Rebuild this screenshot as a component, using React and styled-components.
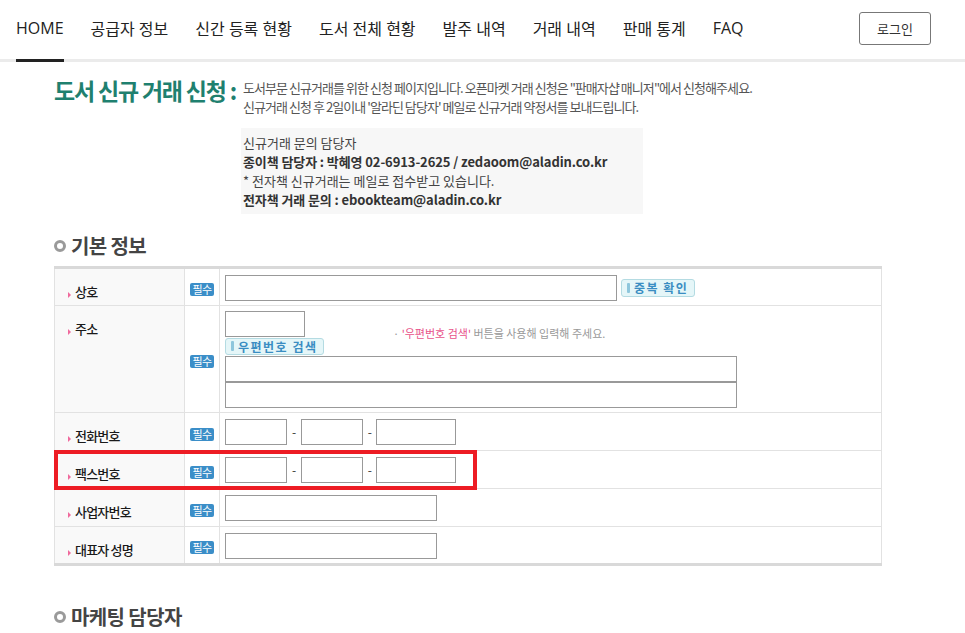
import styled, { createGlobalStyle } from 'styled-components';

const GlobalStyle = createGlobalStyle`
  body {
    margin: 0;
    background: #fff;
    font-family: "Noto Sans CJK KR", "Noto Sans", sans-serif;
    color: #333;
  }
  * { box-sizing: border-box; }
`;

// header
const Header = styled.header`
  display: flex;
  align-items: stretch;
  height: 62px;
  padding: 0 34px 0 16px;
  border-bottom: 3px solid #ebebeb;
`;

const Nav = styled.nav`
  display: flex;
  gap: 27px;
  flex: 1;
`;

const NavItem = styled.a`
  display: flex;
  align-items: center;
  margin-bottom: -3px;
  padding-bottom: 4px;
  border-bottom: 3px solid ${p => (p.$active ? '#222' : 'transparent')};
  font-family: "Open Sans", "Noto Sans CJK KR", sans-serif;
  font-size: 16px;
  color: #222;
  text-decoration: none;
`;

const LoginButton = styled.button`
  align-self: flex-start;
  margin-top: 12px;
  width: 72px;
  height: 33px;
  background: #fff;
  border: 1px solid #777;
  border-radius: 3px;
  font-family: "Noto Sans CJK KR", sans-serif;
  font-size: 13px;
  color: #333;
`;

// intro
const Main = styled.main`
  width: 882px;
  padding-left: 54px;
`;

const Intro = styled.section`
  display: flex;
  margin-top: 16px;
`;

const Title = styled.h1`
  width: 187px;
  margin: 0;
  font-size: 23px;
  line-height: 24px;
  font-weight: bold;
  letter-spacing: -1.2px;
  color: #1f806f;
  white-space: nowrap;
`;

const IntroBody = styled.div`
  display: flex;
  flex-direction: column;
`;

const Desc = styled.p`
  margin: 0 0 0 2px;
  font-size: 13px;
  line-height: 19px;
  letter-spacing: -0.95px;
  color: #555;
  white-space: nowrap;
`;

const InfoBox = styled.div`
  width: 402px;
  margin-top: 12px;
  padding: 5px 2px;
  background: #f7f7f7;
  font-size: 13px;
  line-height: 19px;
  color: #444;

  & strong {
    color: #333;
    letter-spacing: -0.1px;
  }
`;

// section
const SectionTitle = styled.h2`
  display: flex;
  align-items: center;
  margin: ${p => p.$top || '20px'} 0 8px;
  font-size: 20px;
  line-height: 24px;
  font-weight: bold;
  letter-spacing: -0.6px;
  color: #444;
`;

const Ring = styled.span`
  width: 12px;
  height: 12px;
  margin-right: 5px;
  border: 3px solid #9a9a9a;
  border-radius: 50%;
`;

const FormTable = styled.table`
  width: 828px;
  border-collapse: collapse;
  border-top: 3px solid #d9d9d9;
  border-bottom: 3px solid #d9d9d9;
`;

const Row = styled.tr`
  height: ${p => p.$h || 38}px;
`;

const LabelCell = styled.th`
  position: relative;
  width: 130px;
  padding: 15px 0 0 13px;
  vertical-align: top;
  text-align: left;
  background: #f9f9f9;
  border: 1px solid #e2e2e2;
  font-size: 13px;
  line-height: 16px;
  font-weight: 500;
  letter-spacing: -0.8px;
  color: #1a1a1a;

  &::before {
    content: '';
    display: inline-block;
    margin: 0 4px 0 0;
    vertical-align: -1px;
    border-left: 3px solid #f06a9d;
    border-top: 3px solid transparent;
    border-bottom: 3px solid transparent;
  }
`;

const BadgeCell = styled.td`
  width: 35px;
  padding: 0;
  text-align: center;
  vertical-align: middle;
  border: 1px solid #e2e2e2;
`;

const Badge = styled.span`
  display: inline-block;
  width: 24px;
  height: 13px;
  border-radius: 2px;
  background: #3b8ec8;
  color: #fff;
  font-size: 11px;
  line-height: 13px;
  letter-spacing: -0.5px;
`;

const FieldCell = styled.td`
  padding: 0 5px;
  vertical-align: middle;
  border: 1px solid #e2e2e2;
`;

const Input = styled.input`
  display: ${p => (p.$block ? 'block' : 'inline-block')};
  width: ${p => p.$w}px;
  height: 26px;
  margin: 0;
  padding: 0 4px;
  border: 1px solid #999;
  border-radius: 0;
  vertical-align: middle;
  font-size: 12px;
  outline: none;
`;

const SmallButton = styled.button`
  display: ${p => (p.$block ? 'flex' : 'inline-flex')};
  align-items: center;
  width: max-content;
  height: ${p => p.$h || 18}px;
  margin: ${p => p.$m || '0'};
  padding: 0 6px 0 5px;
  background: #e5f6f8;
  border: 1px solid #b4dbe2;
  border-radius: 3px;
  font-family: "Noto Sans CJK KR", sans-serif;
  font-size: 12px;
  font-weight: bold;
  letter-spacing: 1.5px;
  color: #3a8dc2;
  vertical-align: middle;

  &::before {
    content: '';
    width: 3px;
    height: 10px;
    margin-right: 4px;
    border-radius: 1px;
    background: #8ec6dc;
  }
`;

const ZipLine = styled.div`
  display: flex;
  align-items: flex-end;
`;

const HelpText = styled.span`
  margin: 0 0 -2px 88px;
  font-size: 11px;
  line-height: 12px;
  color: #999;

  & em {
    font-style: normal;
    color: #e8538a;
  }
`;

const PhoneGroup = styled.div`
  display: flex;
  align-items: center;
`;

const Dash = styled.span`
  margin: 0 4.5px 0 5px;
  font-size: 12px;
  color: #333;
`;

const Highlight = styled.div`
  position: absolute;
  top: -1px;
  left: -1px;
  width: 423px;
  height: 40px;
  border: 4px solid #ed1c24;
  pointer-events: none;
  z-index: 1;
`;

const navItems = ['HOME', '공급자 정보', '신간 등록 현황', '도서 전체 현황', '발주 내역', '거래 내역', '판매 통계', 'FAQ'];

const PhoneInputs = () => (
  <PhoneGroup>
    <Input $w={62} />
    <Dash>-</Dash>
    <Input $w={62} />
    <Dash>-</Dash>
    <Input $w={80} />
  </PhoneGroup>
);

const App = () => {
  return (
    <>
      <GlobalStyle />
      <Header>
        <Nav>
          {navItems.map((item, i) => (
            <NavItem key={item} $active={i === 0}>{item}</NavItem>
          ))}
        </Nav>
        <LoginButton>로그인</LoginButton>
      </Header>

      <Main>
        <Intro>
          <Title>도서 신규 거래 신청 :</Title>
          <IntroBody>
            <Desc>
              도서부문 신규거래를 위한 신청 페이지입니다. 오픈마켓 거래 신청은 "판매자샵 매니저"에서 신청해주세요.
              <br />
              신규거래 신청 후 2일이내 '알라딘 담당자' 메일로 신규거래 약정서를 보내드립니다.
            </Desc>
            <InfoBox>
              신규거래 문의 담당자<br />
              <strong>종이책 담당자 : 박혜영 02-6913-2625 / zedaoom@aladin.co.kr</strong><br />
              * 전자책 신규거래는 메일로 접수받고 있습니다.<br />
              <strong>전자책 거래 문의 : ebookteam@aladin.co.kr</strong>
            </InfoBox>
          </IntroBody>
        </Intro>

        <SectionTitle><Ring />기본 정보</SectionTitle>
        <FormTable>
          <tbody>
            <Row>
              <LabelCell>상호</LabelCell>
              <BadgeCell><Badge>필수</Badge></BadgeCell>
              <FieldCell>
                <Input $w={392} />
                <SmallButton $m="0 0 0 4px">중복 확인</SmallButton>
              </FieldCell>
            </Row>
            <Row $h={107}>
              <LabelCell>주소</LabelCell>
              <BadgeCell><Badge>필수</Badge></BadgeCell>
              <FieldCell>
                <ZipLine>
                  <Input $w={80} />
                  <HelpText>· <em>'우편번호 검색'</em> 버튼을 사용해 입력해 주세요.</HelpText>
                </ZipLine>
                <SmallButton $block $h={17} $m="1px 0 1px">우편번호 검색</SmallButton>
                <Input $w={512} $block />
                <Input $w={512} $block />
              </FieldCell>
            </Row>
            <Row>
              <LabelCell>전화번호</LabelCell>
              <BadgeCell><Badge>필수</Badge></BadgeCell>
              <FieldCell><PhoneInputs /></FieldCell>
            </Row>
            <Row>
              <LabelCell>
                팩스번호
                <Highlight />
              </LabelCell>
              <BadgeCell><Badge>필수</Badge></BadgeCell>
              <FieldCell><PhoneInputs /></FieldCell>
            </Row>
            <Row>
              <LabelCell>사업자번호</LabelCell>
              <BadgeCell><Badge>필수</Badge></BadgeCell>
              <FieldCell><Input $w={212} /></FieldCell>
            </Row>
            <Row>
              <LabelCell>대표자 성명</LabelCell>
              <BadgeCell><Badge>필수</Badge></BadgeCell>
              <FieldCell><Input $w={212} /></FieldCell>
            </Row>
          </tbody>
        </FormTable>

        <SectionTitle $top="39px"><Ring />마케팅 담당자</SectionTitle>
      </Main>
    </>
  );
};

export default App;
